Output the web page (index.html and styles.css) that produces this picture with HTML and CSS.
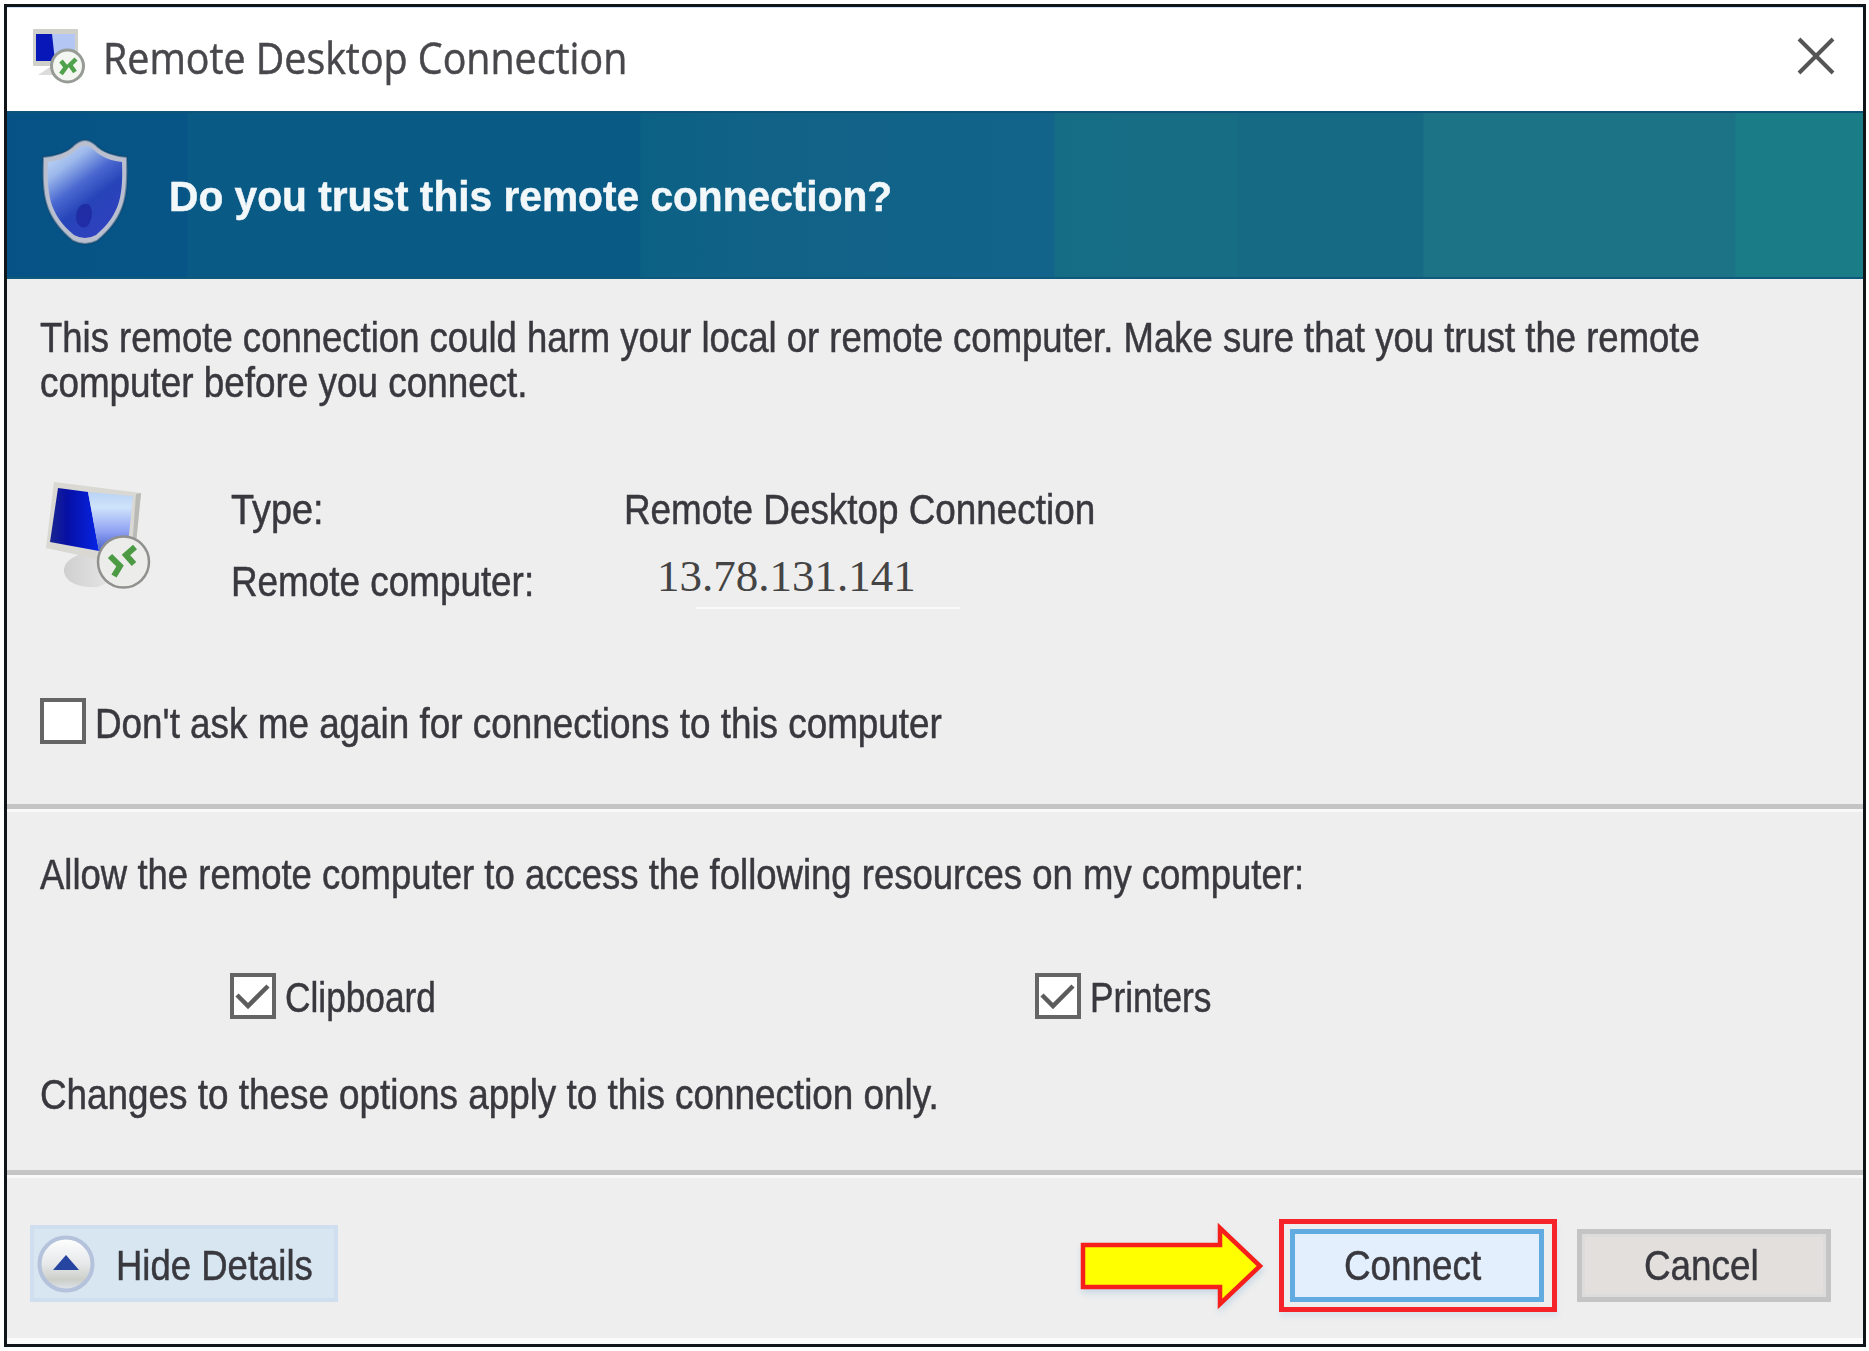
FILE: index.html
```html
<!DOCTYPE html>
<html lang="en">
<head>
<meta charset="utf-8">
<title>Remote Desktop Connection</title>
<link rel="stylesheet" href="styles.css">
</head>
<body>
<main class="window">
  <header class="titlebar">
    <svg class="app-icon" width="56" height="60" viewBox="30 26 56 60">
      <path d="M38 75l12-8h12l-2 8z" fill="#dcdcdc"/>
      <rect x="33" y="29" width="45" height="37" rx="1" fill="#d0d0ca"/>
      <rect x="36" y="34" width="39" height="27" fill="#b4c6f4"/>
      <path d="M36 34h16l3 27H36z" fill="#0818b8"/>
      <circle cx="67.500" cy="66" r="16" fill="#f4f6f2" stroke="#979b95" stroke-width="3"/>
      <path d="M61 61l5 6-5 7M76 59l-6 6 5 7" fill="none" stroke="#4fa24b" stroke-width="4.500"/>
    </svg>
    <span class="title fit">Remote Desktop Connection</span>
    <svg class="close" width="40" height="40" viewBox="0 0 40 40"><path d="M3 3l34 34M37 3L3 37" stroke="#555" stroke-width="4" fill="none"/></svg>
  </header>
  <section class="banner">
    <svg class="shield" width="90" height="110" viewBox="40 136 90 110">
      <defs>
        <linearGradient id="sh" x1="0.1" y1="0" x2="0.7" y2="1">
          <stop offset="0" stop-color="#c4dcf6"/><stop offset="0.22" stop-color="#9db9ec"/>
          <stop offset="0.45" stop-color="#4a68d0"/><stop offset="0.65" stop-color="#2744b8"/><stop offset="1" stop-color="#3040c0"/>
        </linearGradient>
      </defs>
      <path d="M85 140c5 0 9 3 13 7 8 7 19 9 29 10 1 34 1 59-30 84q-12 6-24 0C42 216 42 192 43 157c10-1 21-3 29-10 4-4 8-7 13-7z" fill="#b9bfcf" stroke="#0d4266" stroke-opacity=".5" stroke-width="2"/>
      <path d="M85 146c4 0 7 2 10 5 8 7 17 10 27 11 1 32-1 52-26 73q-11 6-22 0C49 214 47 194 48 162c10-1 19-4 27-11 3-3 6-5 10-5z" fill="url(#sh)"/>
      <path d="M84 204c9-2 10 12 5 20s-13 1-13-6 3-13 8-14z" fill="#1c239c" opacity=".7"/>
    </svg>
    <h1 class="heading fit">Do you trust this remote connection?</h1>
  </section>
  <section class="details">
    <p class="warning">
      <span class="fit fit-tight">This remote connection could harm your local or remote computer. Make sure that you trust the remote</span>
      <span class="fit">computer before you connect.</span>
    </p>
    <div class="connection">
      <svg class="monitor" width="112" height="118" viewBox="42 476 112 118">
        <defs>
          <linearGradient id="dk" x1="0" y1="0" x2="1" y2="0"><stop offset="0" stop-color="#1a2590"/><stop offset=".35" stop-color="#0610a4"/><stop offset="1" stop-color="#0724e6"/></linearGradient>
          <linearGradient id="lt" x1="0" y1="0" x2="0" y2="1"><stop offset="0" stop-color="#b9d3f4"/><stop offset=".25" stop-color="#cfe3fb"/><stop offset=".65" stop-color="#8d9ff2"/><stop offset="1" stop-color="#3b55c4"/></linearGradient>
          <linearGradient id="st" x1="0" y1="0" x2="1" y2="0"><stop offset="0" stop-color="#cfcfcf"/><stop offset="1" stop-color="#e8e8e8"/></linearGradient>
        </defs>
        <path d="M82 552c-12 3-19 10-18 18 2 11 16 16 34 15l18-8V554z" fill="url(#st)"/>
        <path d="M54 480l87 11-7 74-88-19z" fill="#d9d8d3"/>
        <path d="M141 491l-7 70-3-1 5-68z" fill="#b9b9b6"/>
        <path d="M58 486l30 4 11 59-49-9z" fill="url(#dk)"/>
        <path d="M88 490l45 4-6 58-28-3z" fill="url(#lt)"/>
        <circle cx="123.500" cy="560" r="25.500" fill="#ececea" stroke="#8f918f" stroke-width="2.500"/>
        <path d="M110 554l10 10-6 10M135 545l-9 8 8 9" fill="none" stroke="#4d9a45" stroke-width="6"/>
      </svg>
      <dl class="facts">
        <dt><span class="fit fit-wide">Type:</span></dt>
        <dd><span class="fit">Remote Desktop Connection</span></dd>
        <dt><span class="fit">Remote computer:</span></dt>
        <dd class="address">13.78.131.141</dd>
      </dl>
    </div>
    <label class="check remember"><span class="box"></span><span class="fit">Don't ask me again for connections to this computer</span></label>
  </section>
  <section class="resources">
    <p class="line"><span class="fit fit-tight">Allow the remote computer to access the following resources on my computer:</span></p>
    <div class="choices">
      <label class="check"><span class="box"><svg width="38" height="38" viewBox="0 0 38 38"><path d="M3 18l11 11L34 9" fill="none" stroke="#5c5c5c" stroke-width="4.500"/></svg></span><span class="fit fit-narrow">Clipboard</span></label>
      <label class="check"><span class="box"><svg width="38" height="38" viewBox="0 0 38 38"><path d="M3 18l11 11L34 9" fill="none" stroke="#5c5c5c" stroke-width="4.500"/></svg></span><span class="fit fit-narrow">Printers</span></label>
    </div>
    <p class="line"><span class="fit">Changes to these options apply to this connection only.</span></p>
  </section>
  <footer class="footer">
    <button class="toggle">
      <svg width="60" height="62" viewBox="0 0 60 62">
        <defs><linearGradient id="kn" x1="0" y1="0" x2="0" y2="1"><stop offset="0" stop-color="#fff"/><stop offset=".5" stop-color="#e6e8ea"/><stop offset=".8" stop-color="#cccfc8"/><stop offset="1" stop-color="#e0e6f0"/></linearGradient></defs>
        <circle cx="30" cy="32" r="26.500" fill="url(#kn)" stroke="#b4c2dc" stroke-width="4"/>
        <path d="M17 38l13-15 13 15z" fill="#2545a0"/>
      </svg>
      <span class="fit fit-tight">Hide Details</span>
    </button>
    <svg class="arrow" width="186" height="96" viewBox="1079 1219 186 96"><path d="M1083 1246h137v-17l40 38-40 38v-17h-137z" fill="#ff0" stroke="#f5201c" stroke-width="4.500"/></svg>
    <div class="highlight"><button class="btn primary"><span class="fit">Connect</span></button></div>
    <button class="btn cancel"><span class="fit">Cancel</span></button>
  </footer>
</main>
</body>
</html>
```
FILE: styles.css
```css
* { box-sizing: border-box; }
body { margin: 0; padding: 4px 3px 4px 4px; width: 1869px; height: 1351px; background: #fff; overflow: hidden; font-family: "Liberation Sans", sans-serif; font-size: 43px; line-height: 48px; color: #38383e; -webkit-text-stroke: 0.5px; }
h1, p, dl, dd { margin: 0; }
button { font: inherit; color: inherit; padding: 0; margin: 0; border-radius: 0; text-align: left; }
.fit { display: inline-block; white-space: nowrap; transform-origin: 0 50%; transform: scaleX(0.857); }
.fit-tight { transform: scaleX(0.849); }
.fit-narrow { transform: scaleX(0.82); }
.fit-wide { transform: scaleX(0.88); }
.window { display: flex; flex-direction: column; width: 1862px; height: 1343px; border: 3px solid #10151a; background: #eee; }
.titlebar { display: flex; height: 104px; background: #fff; border-top: 1px solid #cfe2f5; flex: none; }
.app-icon { margin: 18px 0 0 23px; flex: none; }
.title { margin: 26px 0 0 17px; font-family: "Open Sans", sans-serif; color: #48484c; transform: scaleX(0.915); }
.close { margin: 28px 27px 0 auto; }
.banner { display: flex; height: 168px; flex: none; border-top: 2px solid #0d5478; border-bottom: 2px solid #0d5a7c; background: linear-gradient(90deg, #065286 0, #075587 180px, #0a5a86 181px, #0a5a86 633px, #0b6184 634px, #126288 760px, #12648a 1047px, #156d85 1048px, #176d84 1230px, #176a84 1231px, #176a84 1416px, #1b7385 1417px, #1b7385 1728px, #1a7c86 1729px); }
.shield { margin: 23px 0 0 33px; flex: none; }
.heading { margin: 59px 0 0 39px; color: #f2f7fa; font-size: 43px; line-height: 48px; font-weight: bold; transform: scaleX(0.946); }
.details { height: 530px; flex: none; padding: 36px 0 0 33px; border-bottom: 5px solid #c4c4c4; }
.warning .fit { display: table; line-height: 45px; }
.connection { display: flex; margin-top: 71px; height: 120px; }
.monitor { flex: none; margin: 2px 0 0 2px; }
.facts { display: grid; grid-template-columns: 393px 600px; grid-template-rows: 72px 58px; margin: 9px 0 0 77px; }
.address { font-family: "Liberation Serif", serif; font-size: 45px; padding-left: 33px; margin-top: -5px; color: #444; -webkit-text-stroke: 0; background: linear-gradient(#fafafa, #fafafa) 72px 55px / 264px 2px no-repeat; }
.check { display: flex; }
.box { width: 46px; height: 46px; border: 4px solid #656565; background: #fff; flex: none; margin-right: 9px; }
.box svg { display: block; }
.remember { margin-top: 102px; }
.remember .fit { margin-top: 1px; }
.resources { height: 366px; flex: none; padding: 38px 0 0 33px; border-top: 3px solid #f8f8f8; border-bottom: 5px solid #c4c4c4; }
.line { height: 48px; }
.choices { display: grid; grid-template-columns: 805px 400px; margin: 75px 0 0 190px; height: 48px; }
.choices + .line { margin-top: 49px; }
.footer { display: flex; border-top: 3px solid #f8f8f8; border-bottom: 6px solid #fbfbfb; flex: 1; padding-left: 23px; }
.toggle { display: flex; width: 308px; height: 77px; margin-top: 47px; border: 4px solid #cfdfef; background: #d7e6f1; padding: 3px 0 0 2px; }
.toggle svg { flex: none; }
.toggle .fit { margin: 9px 0 0 20px; }
.arrow { margin: 40px 0 0 741px; flex: none; filter: drop-shadow(1px 4px 3px #c9d8e6); }
.highlight { width: 278px; height: 93px; flex: none; margin: 41px 0 0 14px; border: 5px solid #f5232a; padding: 5px 6px; box-shadow: 1px 5px 5px #dde5ef; }
.btn { display: block; width: 254px; height: 73px; flex: none; border: 5px solid #62abe0; background: #e3effc; padding: 0 0 1px 49px; }
.cancel { margin: 51px 0 0 20px; border-color: #c4c4c4; background: #e3dfdc; padding-left: 62px; box-shadow: inset 0 0 0 3px #dcdcdc; }
```
